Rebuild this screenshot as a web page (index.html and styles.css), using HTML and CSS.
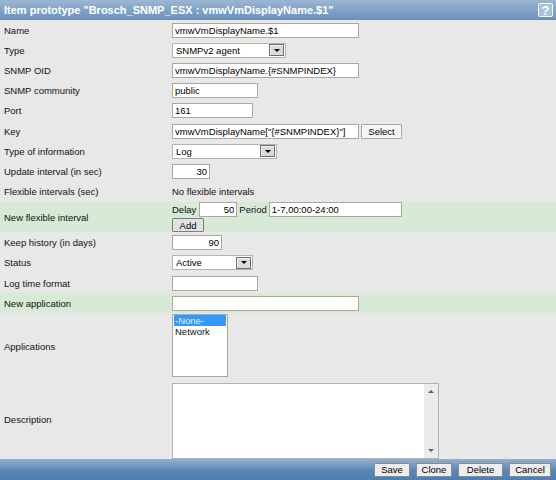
FILE: index.html
```html
<!DOCTYPE html>
<html>
<head>
<meta charset="utf-8">
<link rel="stylesheet" href="styles.css">
</head>
<body>
<div class="form">
  <div class="header">
    <span class="title">Item prototype "Brosch_SNMP_ESX : vmwVmDisplayName.$1"</span>
    <svg class="help" width="15" height="14" viewBox="0 0 15 14">
      <rect x="0.5" y="0.5" width="14" height="13" rx="1" fill="#a9c0da" stroke="#ffffff"/>
      <text x="7.5" y="11.5" text-anchor="middle" font-family="Liberation Sans, Arial, sans-serif" font-weight="bold" font-size="13" fill="#ffffff">?</text>
    </svg>
  </div>
  <div class="body">
    <div class="row"><div class="lbl">Name</div><div class="val"><input class="inp w187" value="vmwVmDisplayName.$1"></div></div>
    <div class="row"><div class="lbl">Type</div><div class="val"><div class="sel w114"><span>SNMPv2 agent</span><span class="arrow"><i></i></span></div></div></div>
    <div class="row"><div class="lbl">SNMP OID</div><div class="val"><input class="inp w187" value="vmwVmDisplayName.{#SNMPINDEX}"></div></div>
    <div class="row"><div class="lbl">SNMP community</div><div class="val"><input class="inp w86" value="public"></div></div>
    <div class="row h21"><div class="lbl">Port</div><div class="val"><input class="inp w81" value="161"></div></div>
    <div class="row"><div class="lbl">Key</div><div class="val gap2"><input class="inp w187" value='vmwVmDisplayName["{#SNMPINDEX}"]'><button class="btn btn-light w41">Select</button></div></div>
    <div class="row"><div class="lbl">Type of information</div><div class="val"><div class="sel w105"><span>Log</span><span class="arrow"><i></i></span></div></div></div>
    <div class="row"><div class="lbl">Update interval (in sec)</div><div class="val"><input class="inp num w38" value="30"></div></div>
    <div class="row h21"><div class="lbl">Flexible intervals (sec)</div><div class="val">No flexible intervals</div></div>
    <div class="row green h30">
      <div class="lbl">New flexible interval</div>
      <div class="val col">
        <div class="line">
          <span class="t-delay">Delay</span>
          <input class="inp num w38" value="50">
          <span class="t-period">Period</span>
          <input class="inp w133" value="1-7,00:00-24:00">
        </div>
        <button class="btn btn-add">Add</button>
      </div>
    </div>
    <div class="row"><div class="lbl">Keep history (in days)</div><div class="val"><input class="inp num w50" value="90"></div></div>
    <div class="row h21"><div class="lbl">Status</div><div class="val"><div class="sel w81"><span>Active</span><span class="arrow"><i></i></span></div></div></div>
    <div class="row"><div class="lbl">Log time format</div><div class="val"><input class="inp w86" value=""></div></div>
    <div class="row green"><div class="lbl">New application</div><div class="val"><input class="inp w187" value=""></div></div>
    <div class="row h66">
      <div class="lbl">Applications</div>
      <div class="val top1">
        <div class="list">
          <div class="opt selected">-None-</div>
          <div class="opt">Network</div>
        </div>
      </div>
    </div>
    <div class="row h80">
      <div class="lbl">Description</div>
      <div class="val top4">
        <div class="tarea">
          <textarea class="tinner"></textarea>
          <div class="sbar"><span class="up"></span><span class="down"></span></div>
        </div>
      </div>
    </div>
  </div>
  <div class="footer">
    <button class="btn fbtn w36">Save</button>
    <button class="btn fbtn w36">Clone</button>
    <button class="btn fbtn w45">Delete</button>
    <button class="btn fbtn w42">Cancel</button>
  </div>
</div>
</body>
</html>
```
FILE: styles.css
```css
* { box-sizing: border-box; }
html, body { margin: 0; padding: 0; }
body {
  width: 556px;
  height: 480px;
  overflow: hidden;
  background: #e8e8e8;
  font-family: "Liberation Sans", Arial, sans-serif;
  font-size: 9.5px;
  color: #111;
}
.form { display: flex; flex-direction: column; height: 480px; }
.header {
  height: 20px;
  flex: none;
  display: flex;
  align-items: center;
  justify-content: space-between;
  padding: 0 3px 0 4px;
  background: linear-gradient(#9cb6d2, #6890bb);
  color: #fff;
}
.title { font-weight: bold; font-size: 11px; }
.help { display: block; }
.body { flex: 1; }
.row { display: flex; align-items: center; height: 20px; }
.row.h21 { height: 21px; }
.row.h30 { height: 30px; }
.row.h66 { height: 66px; }
.row.h80 { height: 80px; }
.row.green { background: #d6ead6; }
.lbl { width: 172px; flex: none; padding-left: 4px; }
.val { display: flex; align-items: center; }
.val.gap2 { gap: 2px; }
.val.col { flex-direction: column; align-items: flex-start; gap: 1px; }
.val.top1 { align-self: flex-start; margin-top: 1px; }
.val.top4 { align-self: flex-start; margin-top: 4px; }
.line { display: flex; align-items: center; }
.t-delay { margin-right: 3px; }
.t-period { margin: 0 2px 0 2px; }

.inp {
  height: 15px;
  margin: 0;
  border: 1px solid #aca899;
  background: #fff;
  padding: 0 2px;
  font: inherit;
  color: #000;
  outline: none;
}
.num { text-align: right; }
.w36 { width: 36px; }
.w38 { width: 38px; }
.w41 { width: 41px; }
.w42 { width: 42px; }
.w45 { width: 45px; }
.w50 { width: 50px; }
.w81 { width: 81px; }
.w86 { width: 86px; }
.w105 { width: 105px; }
.w114 { width: 114px; }
.w133 { width: 133px; }
.w187 { width: 187px; }

.sel {
  height: 15px;
  display: flex;
  align-items: center;
  justify-content: space-between;
  border: 1px solid #b5b2a8;
  background: #fff;
  padding: 0 1px 0 3px;
  color: #000;
}
.arrow {
  width: 15px;
  height: 12px;
  display: flex;
  align-items: center;
  justify-content: center;
  background: #dadada;
  border: 1px solid #6e6e6e;
  box-shadow: inset 1px 1px 0 #f4f4f4;
}
.arrow i {
  display: block;
  width: 0;
  height: 0;
  border-left: 3px solid transparent;
  border-right: 3px solid transparent;
  border-top: 3px solid #000;
}

.btn {
  appearance: none;
  -webkit-appearance: none;
  margin: 0;
  padding: 0;
  font: inherit;
  color: #000;
  display: flex;
  align-items: center;
  justify-content: center;
  height: 14px;
  border: 1px solid #8a8a8a;
  background: #ededed;
  border-radius: 1px;
}
.btn-light { height: 15px; background: #f5f5f5; border-color: #a9a9a9; }
.btn-add { width: 32px; background: #e2e2e2; border-color: #7d7d7d; }

.list {
  width: 56px;
  height: 63px;
  border: 1px solid #aca899;
  background: #fff;
  padding: 0 1px;
}
.opt { height: 11px; line-height: 11px; padding-left: 1px; }
.opt.selected { background: #3399ff; color: #e6f0ff; }

.tarea {
  width: 267px;
  height: 76px;
  display: flex;
  border: 1px solid #b5b2a8;
  background: #fff;
}
.tinner {
  flex: 1;
  border: none;
  margin: 0;
  resize: none;
  outline: none;
  background: #fff;
  font: inherit;
}
.sbar {
  width: 14px;
  flex: none;
  background: #ebebeb;
  display: flex;
  flex-direction: column;
  justify-content: space-between;
  align-items: center;
  padding: 6px 0 6px;
}
.sbar .up, .sbar .down {
  display: block;
  width: 0;
  height: 0;
  border-left: 3px solid transparent;
  border-right: 3px solid transparent;
}
.sbar .up { border-bottom: 3px solid #606060; }
.sbar .down { border-top: 3px solid #606060; }

.footer {
  height: 21px;
  flex: none;
  display: flex;
  align-items: center;
  justify-content: flex-end;
  gap: 6px;
  padding-right: 5px;
  background: linear-gradient(#94b1cf, #5a87b6 55%, #4f7eb0);
}
.fbtn { height: 14px; }
```
